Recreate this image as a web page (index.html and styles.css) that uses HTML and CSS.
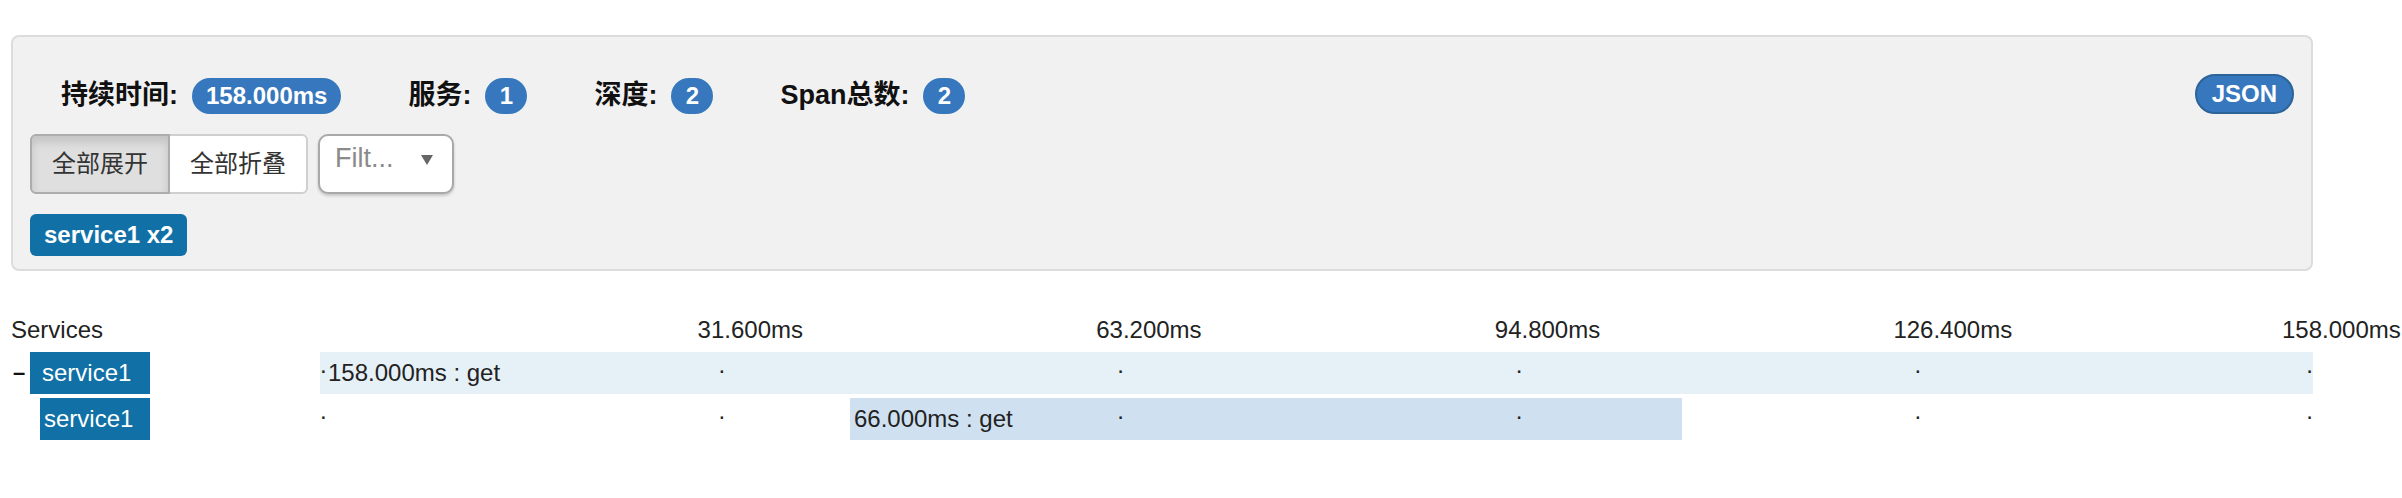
FILE: index.html
```html
<!DOCTYPE html>
<html lang="zh">
<head>
<meta charset="utf-8">
<title>Trace</title>
<link rel="stylesheet" href="styles.css">
</head>
<body>
<div class="page">
  <section class="summary">
    <div class="stats">
      <div class="stat"><span class="stat-label">持续时间:</span><span class="badge">158.000ms</span></div>
      <div class="stat"><span class="stat-label">服务:</span><span class="badge">1</span></div>
      <div class="stat"><span class="stat-label">深度:</span><span class="badge">2</span></div>
      <div class="stat"><span class="stat-label">Span总数:</span><span class="badge">2</span></div>
      <span class="badge json">JSON</span>
    </div>
    <div class="controls">
      <div class="btn-group">
        <button class="btn active">全部展开</button>
        <button class="btn">全部折叠</button>
      </div>
      <div class="select">
        <span class="placeholder">Filt...</span>
        <span class="caret"></span>
      </div>
    </div>
    <div class="tags">
      <span class="svc-tag">service1 x2</span>
    </div>
  </section>

  <section class="timeline">
    <div class="tl-header">
      <div class="tl-title">Services</div>
      <div class="tl-axis">
        <span class="tick" style="left:20%">31.600ms</span>
        <span class="tick" style="left:40%">63.200ms</span>
        <span class="tick" style="left:60%">94.800ms</span>
        <span class="tick" style="left:80%">126.400ms</span>
        <span class="tick end" style="left:100%">158.000ms</span>
      </div>
    </div>

    <div class="tl-row">
      <div class="svc-cell">
        <span class="toggle">–</span>
        <span class="svc-name depth-0">service1</span>
      </div>
      <div class="tl-track">
        <div class="bar bar-root" style="left:0%;width:100%">158.000ms : get</div>
        <span class="marker" style="left:0%">.</span>
        <span class="marker" style="left:20%">.</span>
        <span class="marker" style="left:40%">.</span>
        <span class="marker" style="left:60%">.</span>
        <span class="marker" style="left:80%">.</span>
        <span class="marker last" style="left:100%">.</span>
      </div>
    </div>

    <div class="tl-row">
      <div class="svc-cell child">
        <span class="svc-name depth-1">service1</span>
      </div>
      <div class="tl-track">
        <div class="bar bar-child" style="left:26.59%;width:41.77%">66.000ms : get</div>
        <span class="marker" style="left:0%">.</span>
        <span class="marker" style="left:20%">.</span>
        <span class="marker" style="left:40%">.</span>
        <span class="marker" style="left:60%">.</span>
        <span class="marker" style="left:80%">.</span>
        <span class="marker last" style="left:100%">.</span>
      </div>
    </div>
  </section>
</div>
</body>
</html>
```

FILE: styles.css
```css
html, body {
  margin: 0;
  padding: 0;
  background: #fff;
  overflow-x: hidden;
}

body {
  font-family: "Liberation Sans", "Noto Sans CJK SC", sans-serif;
  color: #333;
}

.page {
  padding: 35px 0 0 11px;
  width: 2302px;
}

/* ---------- summary panel ---------- */
.summary {
  box-sizing: border-box;
  width: 2302px;
  background: #f1f1f1;
  border: 2px solid #dcdcdc;
  border-radius: 8px;
  padding: 37px 17px 13px 17px;
}

.stats {
  display: flex;
  align-items: flex-end;
  height: 40px;
  padding-left: 31px;
}

.stat {
  display: flex;
  align-items: baseline;
  margin-right: 67px;
}

.stat-label {
  font-family: "Liberation Sans", "Noto Sans CJK SC", sans-serif;
  font-weight: bold;
  font-size: 27px;
  line-height: 36px;
  color: #111;
  margin-right: 14px;
}

.badge {
  display: inline-block;
  box-sizing: border-box;
  height: 36px;
  line-height: 36px;
  padding: 0 14px;
  min-width: 42px;
  text-align: center;
  border-radius: 18px;
  background: #3677bd;
  color: #fff;
  font-weight: bold;
  font-size: 24px;
}

.badge.json {
  margin-left: auto;
  height: 40px;
  line-height: 36px;
  padding: 0 15px;
  border: 2px solid #2c6399;
  border-radius: 20px;
}

.controls {
  display: flex;
  align-items: flex-start;
  margin-top: 20px;
}

.btn-group {
  display: flex;
}

.btn {
  box-sizing: border-box;
  height: 60px;
  margin: 0;
  padding: 10px 20px;
  font-family: "Liberation Sans", "Noto Sans CJK SC", sans-serif;
  font-size: 24px;
  line-height: 36px;
  color: #333;
  background: #fff;
  border: 2px solid #cfcfcf;
  cursor: pointer;
}

.btn:first-child {
  border-radius: 6px 0 0 6px;
}

.btn:last-child {
  border-radius: 0 6px 6px 0;
  margin-left: -2px;
}

.btn.active {
  background: #dfdfdf;
  border-color: #adadad;
  box-shadow: inset 0 6px 10px rgba(0, 0, 0, 0.125);
  position: relative;
  z-index: 1;
}

.select {
  box-sizing: border-box;
  width: 136px;
  height: 60px;
  margin-left: 10px;
  display: flex;
  align-items: flex-start;
  padding: 4px 19px 0 15px;
  background: #fff;
  border: 2px solid #a9a9a9;
  border-radius: 10px;
  box-shadow: 0 2px 3px rgba(0, 0, 0, 0.18);
}

.placeholder {
  font-size: 27px;
  line-height: 36px;
  color: #8a8a8a;
}

.caret {
  margin-left: auto;
  margin-top: 15px;
  width: 0;
  height: 0;
  border-left: 6px solid transparent;
  border-right: 6px solid transparent;
  border-top: 10px solid #666;
}

.tags {
  margin-top: 20px;
  display: flex;
}

.svc-tag {
  display: inline-block;
  height: 42px;
  line-height: 42px;
  padding: 0 14px;
  border-radius: 6px;
  background: #1170a6;
  color: #fff;
  font-weight: bold;
  font-size: 24px;
}

/* ---------- timeline ---------- */
.timeline {
  margin-top: 37px;
  font-size: 24px;
  color: #222;
}

.tl-header,
.tl-row {
  display: grid;
  grid-template-columns: 309px 1993px;
}

.tl-header {
  height: 44px;
  line-height: 44px;
}

.tl-title {
  color: #222;
}

.tl-axis {
  position: relative;
}

.tick {
  position: absolute;
  top: 0;
  margin-left: -21px;
  white-space: nowrap;
}

.tick.end {
  margin-left: -31px;
}

.tl-row {
  height: 42px;
  margin-bottom: 4px;
}

.svc-cell {
  display: flex;
  align-items: center;
}

.svc-cell.child {
  padding-left: 29px;
}

.toggle {
  width: 19px;
  padding-left: 2px;
  box-sizing: border-box;
  font-size: 22px;
  font-weight: bold;
  line-height: 42px;
  color: #111;
}

.svc-name {
  box-sizing: border-box;
  height: 42px;
  line-height: 42px;
  background: #1170a6;
  color: #fff;
  font-size: 24px;
}

.svc-name.depth-0 {
  width: 120px;
  padding-left: 12px;
}

.svc-name.depth-1 {
  width: 110px;
  padding-left: 4px;
}

.tl-track {
  position: relative;
  height: 42px;
}

.bar {
  position: absolute;
  top: 0;
  height: 42px;
  line-height: 42px;
  box-sizing: border-box;
  white-space: nowrap;
  color: #222;
}

.bar-root {
  background: #e6f0f7;
  padding-left: 8px;
}

.bar-child {
  background: #cfe1f0;
  padding-left: 4px;
}

.marker {
  position: absolute;
  top: 0;
  line-height: 26px;
  color: #222;
}

.marker.last {
  transform: translateX(-100%);
}
```
